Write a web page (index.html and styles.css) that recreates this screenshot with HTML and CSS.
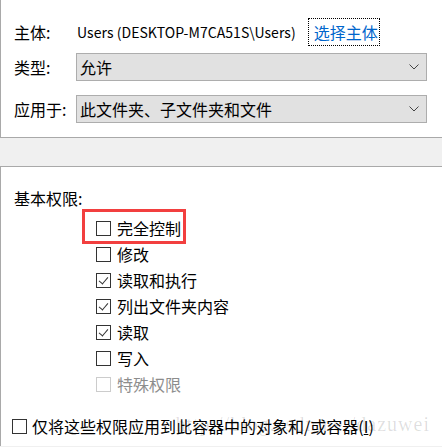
FILE: index.html
```html
<!DOCTYPE html>
<html lang="zh-CN">
<head>
<meta charset="utf-8">
<link rel="stylesheet" href="styles.css">
</head>
<body>
<div class="panel top">
  <div class="row principal">
    <span class="label">主体:</span>
    <span class="value">Users (DESKTOP-M7CA51S\Users)</span>
    <span class="link">选择主体</span>
  </div>
  <div class="row field">
    <span class="label">类型:</span>
    <div class="select"><span>允许</span><svg class="chev" width="10" height="6" viewBox="0 0 10 6"><path d="M0.5 0.5 L5 5 L9.5 0.5" fill="none" stroke="#444" stroke-width="1"/></svg></div>
  </div>
  <div class="row field second">
    <span class="label">应用于:</span>
    <div class="select"><span>此文件夹、子文件夹和文件</span><svg class="chev" width="10" height="6" viewBox="0 0 10 6"><path d="M0.5 0.5 L5 5 L9.5 0.5" fill="none" stroke="#444" stroke-width="1"/></svg></div>
  </div>
</div>
<div class="band"></div>
<div class="panel bottom">
  <div class="section-title">基本权限:</div>
  <ul class="perms">
    <li class="perm highlighted"><span class="box"></span>完全控制</li>
    <li class="perm"><span class="box"></span>修改</li>
    <li class="perm"><span class="box checked"></span>读取和执行</li>
    <li class="perm"><span class="box checked"></span>列出文件夹内容</li>
    <li class="perm"><span class="box checked"></span>读取</li>
    <li class="perm"><span class="box"></span>写入</li>
    <li class="perm disabled"><span class="box"></span>特殊权限</li>
  </ul>
  <div class="apply"><span class="box"></span>仅将这些权限应用到此容器中的对象和/或容器(<u>I</u>)
    <span class="watermark">http://blog.csdn.net/dazuwei</span>
  </div>
</div>
</body>
</html>
```
FILE: styles.css
```css
html, body {
  margin: 0;
  padding: 0;
}
body {
  width: 442px;
  height: 447px;
  overflow: hidden;
  background: #f0f0f0;
  font-family: "Noto Sans CJK SC", "Noto Sans", sans-serif;
  font-size: 16px;
  color: #000;
}
.panel {
  background: #fff;
  border-left: 1px solid #a9a9a9;
}
.top {
  box-sizing: border-box;
  height: 138px;
  border-bottom: 1px solid #a9a9a9;
  padding-top: 18px;
}
.row {
  display: flex;
  align-items: center;
  position: relative;
}
.label {
  width: 62px;
  padding-left: 13px;
  flex: none;
}
.principal {
  height: 28px;
}
.principal .value {
  margin-left: 1px;
  font-size: 14px;
  letter-spacing: 0.05px;
}
.link {
  margin-left: 12px;
  height: 28px;
  box-sizing: border-box;
  padding: 0 1px 0 5px;
  border: 1px dotted #000;
  color: #0066cc;
  display: flex;
  align-items: center;
}
.field {
  margin-top: 7px;
  height: 28px;
}
.field.second {
  margin-top: 14px;
}
.select {
  width: 351px;
  height: 28px;
  box-sizing: border-box;
  background: #e1e1e1;
  border: 1px solid #adadad;
  display: flex;
  align-items: center;
  justify-content: space-between;
  padding: 0 7px 0 3px;
}
.chev {
  display: block;
}
.band {
  height: 28px;
}
.bottom {
  border-top: 1px solid #a9a9a9;
  height: 259px;
  padding-top: 20px;
  position: relative;
}
.section-title {
  padding-left: 13px;
  line-height: 22px;
}
.perms {
  list-style: none;
  margin: 0;
  padding: 6px 0 0 95px;
}
.perm {
  height: 26px;
  display: flex;
  align-items: center;
  position: relative;
}
.box {
  width: 15px;
  height: 15px;
  box-sizing: border-box;
  border: 1px solid #333;
  margin-right: 6px;
  flex: none;
  position: relative;
}
.box.checked::after {
  content: "";
  position: absolute;
  left: 4px;
  top: 1px;
  width: 4px;
  height: 8px;
  border-right: 1px solid #333;
  border-bottom: 1px solid #333;
  transform: rotate(40deg);
}
.highlighted::before {
  content: "";
  position: absolute;
  left: -14px;
  top: -6px;
  width: 104px;
  height: 35px;
  box-sizing: border-box;
  border: 3px solid #f23f3f;
}
.disabled {
  color: #8d8d8d;
}
.disabled .box {
  border-color: #cccccc;
}
.apply {
  margin-top: 16px;
  padding-left: 11px;
  height: 26px;
  display: flex;
  align-items: center;
  position: relative;
}
.apply .box {
  margin-right: 5px;
}
.apply u {
  text-decoration: underline;
}
.watermark {
  position: absolute;
  right: 12px;
  top: 0;
  font-family: "Liberation Serif", "DejaVu Serif", serif;
  font-size: 20px;
  color: rgba(0, 0, 0, 0.13);
  letter-spacing: 1px;
  pointer-events: none;
}
```
